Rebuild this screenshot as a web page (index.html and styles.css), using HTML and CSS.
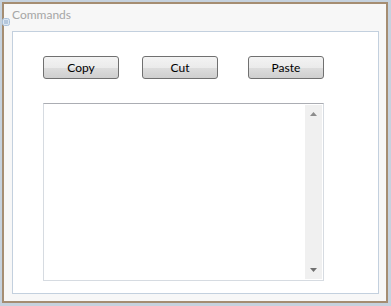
FILE: index.html
```html
<!DOCTYPE html>
<html>
<head>
<meta charset="utf-8">
<link rel="stylesheet" href="styles.css">
</head>
<body>
<div class="window">
  <div class="title">Commands</div>
  <svg class="badge" width="8" height="8" viewBox="0 0 8 8"><rect x="0.5" y="0.5" width="7" height="7" rx="2" fill="#dbe6f2" stroke="#a9c0da"/><path d="M2 3h4M2 5h4" stroke="#8fa9c8" stroke-width="1"/></svg>
  <div class="group">
    <div class="buttons">
      <button class="btn b1">Copy</button>
      <button class="btn b2">Cut</button>
      <button class="btn b3">Paste</button>
    </div>
    <div class="textbox">
      <div class="area"></div>
      <div class="scroll">
        <svg width="7" height="4" viewBox="0 0 7 4"><path d="M0 4L3.5 0L7 4Z" fill="#8c8c8c"/></svg>
        <svg width="7" height="4" viewBox="0 0 7 4"><path d="M0 0L3.5 4L7 0Z" fill="#707070"/></svg>
      </div>
    </div>
  </div>
</div>
</body>
</html>
```
FILE: styles.css
```css
html, body { margin: 0; padding: 0; }
body {
  width: 391px; height: 306px;
  background: #c6d2de;
  padding: 2px 0 0 2px;
  box-sizing: border-box;
  font-family: Lato, "Noto Sans", "Liberation Sans", sans-serif;
}
.window {
  position: relative;
  width: 386px; height: 301px;
  box-sizing: border-box;
  border: 2px solid #a58d72;
  background: #f7f7f7;
  padding: 0 7px 7px 8px;
  display: flex; flex-direction: column;
}
.title {
  height: 27px;
  box-sizing: border-box;
  padding: 3px 0 0 0;
  font-size: 12px;
  color: #a6a6a6;
  line-height: 15px;
}
.badge { position: absolute; left: -2px; top: 14px; }
.group {
  flex: 1;
  border: 1px solid #c3d0de;
  background: #ffffff;
  padding: 24px 0 0 30px;
  display: flex; flex-direction: column;
}
.buttons { display: flex; height: 23px; }
.btn {
  width: 76px; height: 23px;
  box-sizing: border-box;
  border: 1px solid #707070;
  border-radius: 3px;
  background: linear-gradient(#f3f3f3 0%, #ebebeb 50%, #dddddd 51%, #cfcfcf 100%);
  font-family: inherit;
  font-size: 12px;
  color: #000;
  padding: 0;
  line-height: 20px;
}
.b2 { margin-left: 23px; }
.b3 { margin-left: 30px; }
.textbox {
  margin-top: 24px;
  width: 281px; height: 178px;
  box-sizing: border-box;
  border: 1px solid #d6dbe1;
  border-top-color: #abadb3;
  background: #fff;
  display: flex;
  padding: 1px 1px 1px 0;
}
.area { flex: 1; }
.scroll {
  width: 17px;
  background: #f0f0f0;
  display: flex; flex-direction: column; justify-content: space-between; align-items: center;
  padding: 7px 0 7px 0;
  box-sizing: border-box;
}
```
